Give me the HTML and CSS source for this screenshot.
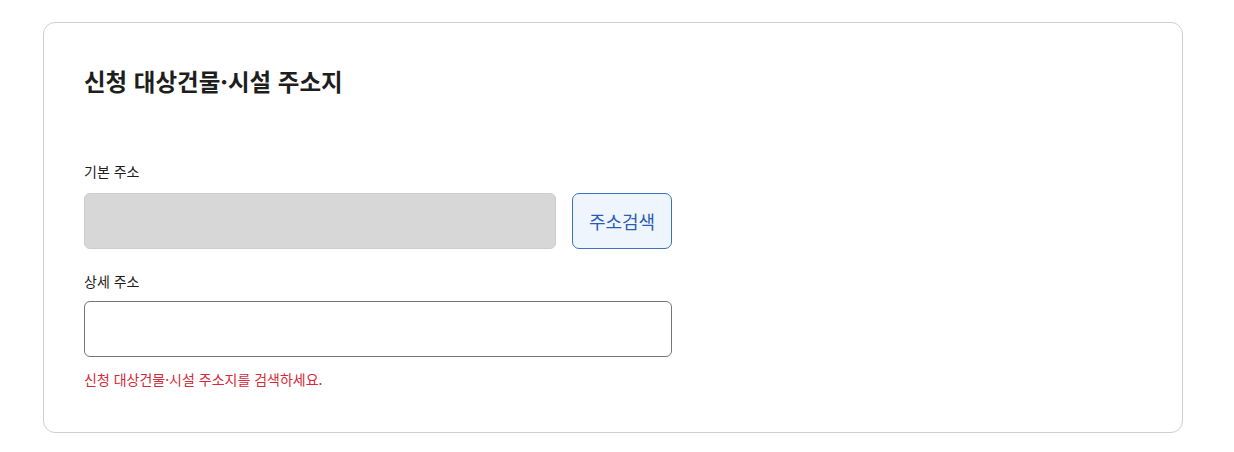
FILE: index.html
```html
<!DOCTYPE html>
<html lang="ko">
<head>
<meta charset="utf-8">
<title>신청 대상건물·시설 주소지</title>
<link rel="stylesheet" href="styles.css">
</head>
<body>
<section class="card">
  <h2 class="title">신청 대상건물·시설 주소지</h2>
  <div class="field first">
    <label class="label" for="addr1">기본 주소</label>
    <div class="row">
      <input id="addr1" class="input readonly" type="text" readonly>
      <button class="btn" type="button">주소검색</button>
    </div>
  </div>
  <div class="field second">
    <label class="label" for="addr2">상세 주소</label>
    <input id="addr2" class="input full" type="text">
    <p class="error">신청 대상건물·시설 주소지를 검색하세요.</p>
  </div>
</section>
</body>
</html>
```

FILE: styles.css
```css
html, body {
  margin: 0;
  padding: 0;
  background: #ffffff;
}
body {
  padding: 22px 0 0 43px;
  font-family: "Noto Sans CJK KR", "Noto Sans", sans-serif;
  color: #1e1e1e;
}
.card {
  box-sizing: border-box;
  width: 1140px;
  height: 411px;
  border: 1px solid #cfcfcf;
  border-radius: 12px;
  padding: 40px 40px 0 40px;
}
.title {
  margin: 0;
  font-size: 23.5px;
  line-height: 36px;
  font-weight: 700;
  color: #1e1e1e;
}
.field.first {
  margin-top: 62px;
}
.field.second {
  margin-top: 22px;
}
.label {
  display: block;
  font-size: 14px;
  line-height: 20px;
  color: #1e1e1e;
}
.row {
  display: flex;
  gap: 16px;
  margin-top: 12px;
}
.input {
  box-sizing: border-box;
  height: 56px;
  border-radius: 6px;
  font-family: inherit;
  font-size: 16px;
  padding: 0 14px;
  margin: 0;
  outline: none;
}
.input.readonly {
  width: 472px;
  background: #d7d7d7;
  border: 1px solid #cccccc;
}
.input.full {
  display: block;
  width: 588px;
  margin-top: 10px;
  background: #ffffff;
  border: 1px solid #767676;
}
.btn {
  box-sizing: border-box;
  width: 100px;
  height: 56px;
  border: 1px solid #3d6fc7;
  border-radius: 7px;
  background: #eef5fd;
  color: #2b5db2;
  font-family: inherit;
  font-size: 18px;
  padding: 0;
}
.error {
  margin: 12px 0 0 0;
  font-size: 14px;
  line-height: 20px;
  color: #d42a38;
}
```
